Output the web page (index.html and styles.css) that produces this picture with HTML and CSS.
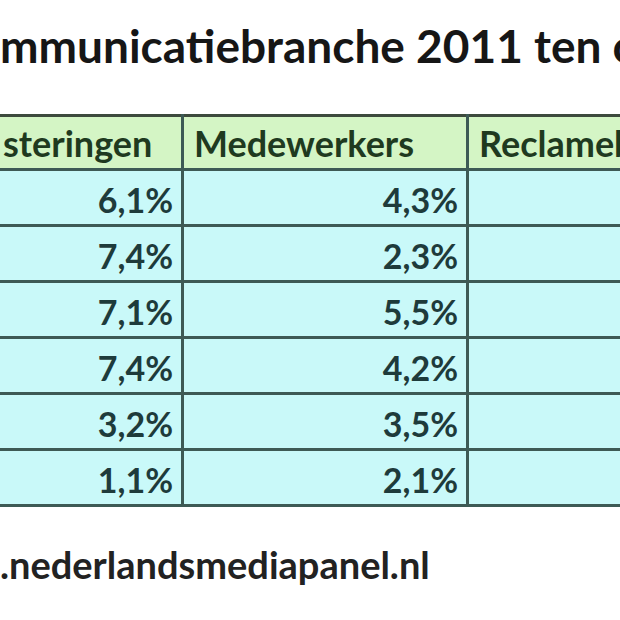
FILE: index.html
```html
<!DOCTYPE html>
<html lang="nl">
<head>
    <meta charset="UTF-8">
    <meta name="viewport" content="width=device-width, initial-scale=1.0">
    <title>Communicatiebranche 2011</title>
    <link rel="stylesheet" href="styles.css">
</head>
<body>

    <h1 class="title">mmunicatiebranche 2011 ten opzichte van 2010</h1>

    <div class="sheet">
        <table class="growth">
            <colgroup>
                <col class="col-a">
                <col class="col-b">
                <col class="col-c">
            </colgroup>
            <thead>
                <tr>
                    <th>steringen</th>
                    <th>Medewerkers</th>
                    <th>Reclamebestedingen</th>
                </tr>
            </thead>
            <tbody>
                <tr><td>6,1%</td><td>4,3%</td><td></td></tr>
                <tr><td>7,4%</td><td>2,3%</td><td></td></tr>
                <tr><td>7,1%</td><td>5,5%</td><td></td></tr>
                <tr><td>7,4%</td><td>4,2%</td><td></td></tr>
                <tr><td>3,2%</td><td>3,5%</td><td></td></tr>
                <tr><td>1,1%</td><td>2,1%</td><td></td></tr>
            </tbody>
        </table>
    </div>

    <p class="source">.nederlandsmediapanel.nl</p>

</body>
</html>
```

FILE: styles.css
```css
body {
    font-family: Lato, "Open Sans", sans-serif;
    margin: 0;
    padding: 0;
    background-color: #fff;
    color: #1a1a1a;
    overflow: hidden;
    width: 620px;
}
.title {
    margin: 0;
    padding: 18px 0 0 0;
    font-size: 46px;
    font-weight: bold;
    line-height: 56px;
    white-space: nowrap;
    color: #161616;
}
.sheet {
    margin-top: 40px;
    overflow: hidden;
}
.growth {
    border-collapse: collapse;
    table-layout: fixed;
    width: 820px;
    margin-left: -20px;
}
.col-a {
    width: 201px;
}
.col-b {
    width: 285px;
}
.col-c {
    width: 334px;
}
.growth th,
.growth td {
    border: 3px solid #3d5a55;
    padding: 0 8px 0 10px;
    white-space: nowrap;
    overflow: hidden;
}
.growth th {
    height: 51px;
    background-color: #d4f5c5;
    color: #1f3a1f;
    text-align: left;
    font-size: 36px;
    border-top-color: #3d4a3d;
}
.growth th:first-child {
    padding-left: 20px;
}
.growth td {
    height: 49px;
    padding-top: 4px;
    background-color: #c9f9f9;
    color: #1e3b3b;
    text-align: right;
    font-size: 34px;
    font-weight: bold;
}
.source {
    margin: 34px 0 0 0;
    font-size: 38px;
    font-weight: bold;
    color: #222;
    white-space: nowrap;
}
```
